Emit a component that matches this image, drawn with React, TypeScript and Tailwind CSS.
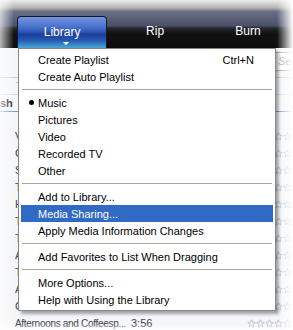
import React from 'react';

type Item = { label?: string; shortcut?: string; bullet?: boolean; active?: boolean; sep?: boolean };

const MENU: Item[] = [
  { label: 'Create Playlist', shortcut: 'Ctrl+N' },
  { label: 'Create Auto Playlist' },
  { sep: true },
  { label: 'Music', bullet: true },
  { label: 'Pictures' },
  { label: 'Video' },
  { label: 'Recorded TV' },
  { label: 'Other' },
  { sep: true },
  { label: 'Add to Library...' },
  { label: 'Media Sharing...', active: true },
  { label: 'Apply Media Information Changes' },
  { sep: true },
  { label: 'Add Favorites to List When Dragging' },
  { sep: true },
  { label: 'More Options...' },
  { label: 'Help with Using the Library' },
];

// only the first letter of these titles peeks out left of the menu
const ROWS = ['V', 'C', 'S', 'T', 'H', 'T', 'T', 'A', 'T', 'A', 'C'];

function Star() {
  return (
    <svg width="9" height="9" viewBox="0 0 10 10" className="shrink-0">
      <path d="M5 0.8 L6.2 3.6 L9.2 3.8 L6.9 5.8 L7.6 8.9 L5 7.3 L2.4 8.9 L3.1 5.8 L0.8 3.8 L3.8 3.6 Z"
        fill="none" stroke="#b3b9c8" strokeWidth="0.9" strokeLinejoin="round" />
    </svg>
  );
}

function Stars() {
  return (
    <div className="flex">
      <Star /><Star /><Star /><Star /><Star />
    </div>
  );
}

export default function App() {
  return (
    <div className="relative w-[293px] h-[330px] overflow-hidden bg-white font-['Liberation_Sans',Arial,sans-serif]">
      {/* window chrome + nav bar */}
      <div className="h-[11px] bg-[linear-gradient(to_bottom,#ececec,#b4b4b4_70%,#7a7a7a)]" />
      <div className="h-[37px] flex items-end pl-[17px] gap-[3px] bg-[linear-gradient(to_bottom,#6a7089_0%,#4a5066_40%,#262833_46%,#121212_60%,#0d0d0d_100%)]">
        <div className="relative w-[97px] h-[32px] rounded-t-[4px] border border-b-0 border-[#15182a] bg-[linear-gradient(to_bottom,#7394de_0%,#4d74cf_30%,#2f56b8_48%,#1c3d9c_55%,#2458b0_75%,#4aa8da_100%)] flex items-center justify-center">
          <span className="text-white text-[12px] -mt-[2px]">Library</span>
          <div className="absolute left-[45px] bottom-[3px] w-0 h-0 border-l-[3px] border-r-[3px] border-t-[3px] border-l-transparent border-r-transparent border-t-white" />
        </div>
        <div className="w-[97px] h-[32px] flex items-center justify-center">
          <span className="text-white text-[12px] -mt-[2px]">Rip</span>
        </div>
        <div className="w-[97px] h-[32px] flex items-center justify-center">
          <span className="text-white text-[12px] -mt-[2px]">Burn</span>
        </div>
      </div>

      {/* library list behind the menu */}
      <div className="relative h-[282px] bg-[#f4f6fa] text-[11px] text-[#555]">
        <div className="flex justify-end pt-[4px]">
          <div className="w-[20px] h-[19px] border border-r-0 border-[#aab0bd] bg-white pl-[4px] italic text-[#9aa] leading-[17px]">Se</div>
        </div>
        <div className="mt-[6px] h-[1px] bg-[#c9ced8]" />
        <div className="h-[17px] border-b border-[#d5d9e0] pl-[16px] text-[#aaa] leading-[16px]">T</div>
        <div className="h-[17px] border-b border-[#7a9ad8] font-bold text-[#222] leading-[16px]">sh</div>
        <div className="pt-[16px]">
          {ROWS.map((r, i) => (
            <div key={i} className="h-[17px] flex items-center justify-between pl-[15px] pr-[1px] text-[#444]">
              <span>{r}</span>
              <Stars />
            </div>
          ))}
          <div className="h-[16px] flex items-center pl-[15px] pr-[1px] text-[#444] whitespace-nowrap">
            <span className="text-[10px] tracking-[-0.3px]">Afternoons and Coffeesp...</span>
            <span className="ml-[5px] flex-1">3:56</span>
            <Stars />
          </div>
        </div>
      </div>

      {/* Library dropdown menu */}
      <div className="absolute left-[18px] top-[48px] w-[258px] border border-[#868686] bg-white p-[2px] shadow-[3px_3px_3px_rgba(0,0,0,0.35)] text-[11px] text-black">
        {MENU.map((it, i) =>
          it.sep ? (
            <div key={i} className="h-[9px] flex items-center px-[1px]">
              <div className="h-[1px] w-full bg-[#aca899]" />
            </div>
          ) : (
            <div key={i}
              className={`relative h-[17px] flex items-center justify-between pl-[17px] pr-[19px] pt-[1px] ${it.active ? 'bg-[#316ac5] text-white' : ''}`}>
              {it.bullet && <div className="absolute left-[8px] top-[6px] w-[5px] h-[5px] rounded-full bg-black" />}
              <span>{it.label}</span>
              {it.shortcut && <span>{it.shortcut}</span>}
            </div>
          )
        )}
      </div>

      {/* soft fade at the picture edges */}
      <div className="absolute left-0 top-0 bottom-0 w-[14px] bg-gradient-to-r from-white/70 to-transparent pointer-events-none" />
      <div className="absolute right-0 top-0 bottom-0 w-[16px] bg-gradient-to-l from-white to-transparent pointer-events-none" />
      <div className="absolute left-0 right-0 bottom-0 h-[6px] bg-gradient-to-t from-white/70 to-transparent pointer-events-none" />
    </div>
  );
}
